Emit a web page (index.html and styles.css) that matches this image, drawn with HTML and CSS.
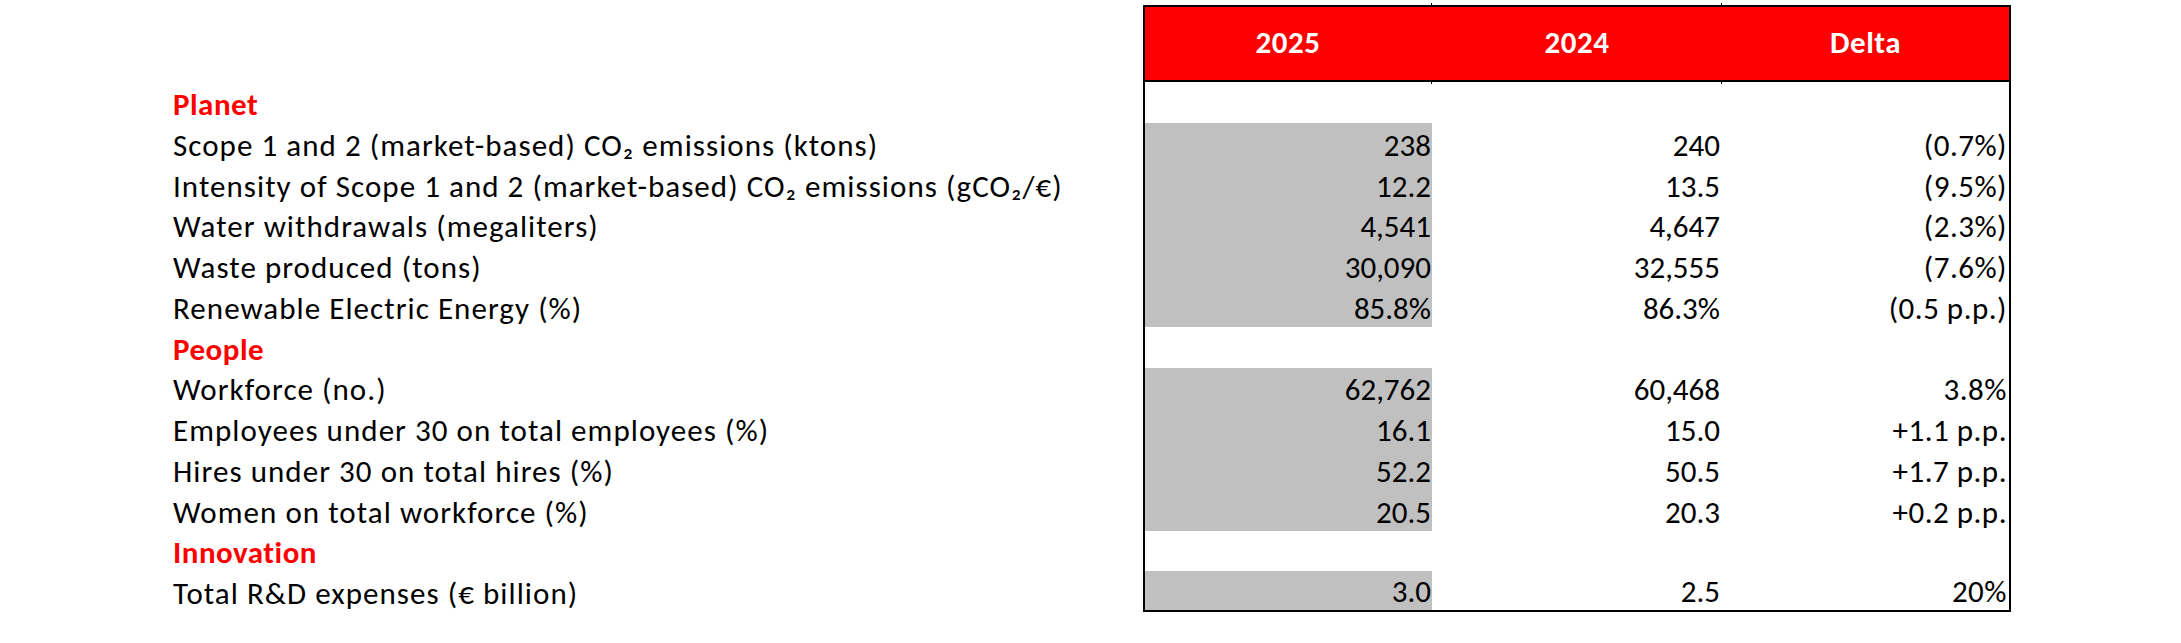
FILE: index.html
```html
<!DOCTYPE html>
<html lang="en">
<head>
<meta charset="utf-8">
<title>Sustainability KPIs</title>
<link rel="stylesheet" href="styles.css">
</head>
<body>
<div class="sheet">
  <div class="lbl"></div>
  <div class="hd c1">2025</div>
  <div class="hd c2">2024</div>
  <div class="hd c3">Delta</div>

  <div class="lbl sec">Planet</div>
  <div class="v c1 blank"></div><div class="v c2"></div><div class="v c3"></div>

  <div class="lbl">Scope 1 and 2 (market-based) CO₂ emissions (ktons)</div>
  <div class="v c1">238</div><div class="v c2">240</div><div class="v c3">(0.7%)</div>

  <div class="lbl">Intensity of Scope 1 and 2 (market-based) CO₂ emissions (gCO₂/€)</div>
  <div class="v c1">12.2</div><div class="v c2">13.5</div><div class="v c3">(9.5%)</div>

  <div class="lbl">Water withdrawals (megaliters)</div>
  <div class="v c1">4,541</div><div class="v c2">4,647</div><div class="v c3">(2.3%)</div>

  <div class="lbl">Waste produced (tons)</div>
  <div class="v c1">30,090</div><div class="v c2">32,555</div><div class="v c3">(7.6%)</div>

  <div class="lbl">Renewable Electric Energy (%)</div>
  <div class="v c1">85.8%</div><div class="v c2">86.3%</div><div class="v c3">(0.5 p.p.)</div>

  <div class="lbl sec">People</div>
  <div class="v c1 blank"></div><div class="v c2"></div><div class="v c3"></div>

  <div class="lbl">Workforce (no.)</div>
  <div class="v c1">62,762</div><div class="v c2">60,468</div><div class="v c3">3.8%</div>

  <div class="lbl">Employees under 30 on total employees (%)</div>
  <div class="v c1">16.1</div><div class="v c2">15.0</div><div class="v c3">+1.1 p.p.</div>

  <div class="lbl">Hires under 30 on total hires (%)</div>
  <div class="v c1">52.2</div><div class="v c2">50.5</div><div class="v c3">+1.7 p.p.</div>

  <div class="lbl">Women on total workforce (%)</div>
  <div class="v c1">20.5</div><div class="v c2">20.3</div><div class="v c3">+0.2 p.p.</div>

  <div class="lbl sec">Innovation</div>
  <div class="v c1 blank"></div><div class="v c2"></div><div class="v c3"></div>

  <div class="lbl">Total R&amp;D expenses (€ billion)</div>
  <div class="v c1 last">3.0</div><div class="v c2 last">2.5</div><div class="v c3 last">20%</div>
</div>
</body>
</html>
```
FILE: styles.css
```css
html, body {
  margin: 0;
  padding: 0;
  background: #ffffff;
}

body {
  font-family: Calibri, Carlito, Lato, "DejaVu Sans", sans-serif;
  font-size: 31px;
  color: #000000;
}

.sheet {
  display: grid;
  grid-template-columns: 1143px 289px 290px 289px;
  grid-template-rows: 77.25px;
  grid-auto-rows: 40.75px;
  padding-top: 5px;
  width: 2181px;
}

.sheet > div {
  box-sizing: border-box;
  display: flex;
  align-items: flex-end;
  white-space: nowrap;
  line-height: normal;
}

.lbl {
  padding-left: 173px;
  letter-spacing: 1.05px;
}

.sec {
  color: #ff0000;
  font-weight: bold;
  letter-spacing: 0.5px;
}

/* header cells */
.hd {
  position: relative;
  background: #ff0000;
  color: #ffffff;
  font-weight: bold;
  letter-spacing: 0.5px;
  justify-content: center;
  align-items: center !important;
  border-top: 2px solid #000000;
  border-bottom: 2px solid #000000;
  padding-bottom: 3px;
}

/* value cells */
.v {
  justify-content: flex-end;
  padding-right: 2px;
}

.c1 {
  border-left: 2px solid #000000;
  background: #c0c0c0;
  padding-right: 1px;
}

.c1.blank {
  background: #ffffff;
}

.c3 {
  border-right: 2px solid #000000;
  letter-spacing: 0.5px;
}

.hd.c1 {
  background: #ff0000;
}

.last {
  position: relative;
  border-bottom: 2px solid #000000;
}

/* small column separator ticks peeking out at the outer borders */
.hd.c2::before,
.hd.c3::before,
.hd.c2::after,
.hd.c3::after,
.last.c2::after,
.last.c3::after {
  content: "";
  position: absolute;
  left: -1px;
  width: 1px;
  height: 2px;
  background: #000000;
}

.hd.c2::before,
.hd.c3::before {
  top: -4px;
}

.hd.c2::after,
.hd.c3::after,
.last.c2::after,
.last.c3::after {
  bottom: -4px;
}
```
